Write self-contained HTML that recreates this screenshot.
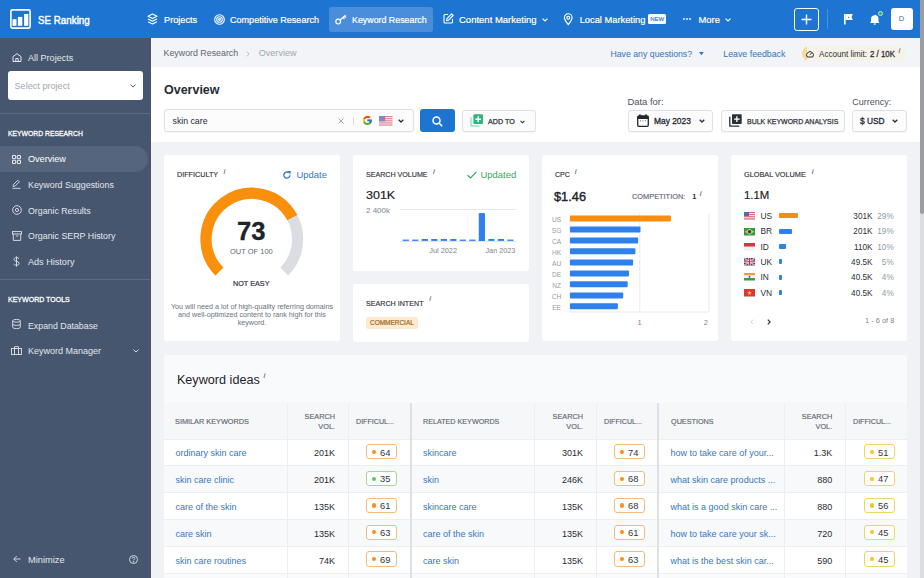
<!DOCTYPE html>
<html><head><meta charset="utf-8">
<style>
*{box-sizing:border-box;margin:0;padding:0}
html,body{width:924px;height:578px;overflow:hidden}
body{position:relative;background:#f1f2f6;font-family:"Liberation Sans",sans-serif;color:#262b33}
.a{position:absolute;white-space:nowrap}
svg{position:absolute;overflow:visible}
#hdr{position:absolute;left:0;top:0;width:920px;height:38px;background:#1d74d1}
#hdr .t{position:absolute;color:#fff;font-size:9.2px;line-height:12px;top:13.5px;white-space:nowrap;-webkit-text-stroke:0.2px #fff}
#sb{position:absolute;left:0;top:38px;width:150.6px;height:540px;background:#45566e}
#sb .t{position:absolute;color:#e3e7ec;font-size:8.9px;line-height:12px;white-space:nowrap;left:28px}
#sb .h{position:absolute;color:#fff;font-size:7.6px;line-height:10px;white-space:nowrap;left:7.7px;-webkit-text-stroke:0.3px #fff}
#scr{position:absolute;left:920px;top:0;width:4px;height:578px;background:#dcdde0}
#thumb{position:absolute;left:920px;top:0;width:4px;height:214px;background:#9b9da1;border-radius:0 0 2px 2px}
.card{position:absolute;background:#fff;border-radius:3px}
.lbl{position:absolute;font-size:7.3px;line-height:10px;color:#30353d;white-space:nowrap;-webkit-text-stroke:0.15px #30353d}
.ii{position:absolute;font-size:8px;font-style:italic;color:#4a5260;line-height:8px}
.btn{position:absolute;background:#fcfcfd;border:1px solid #dde0e5;border-radius:3px;box-shadow:0 1px 1px rgba(0,0,0,0.04)}
</style></head><body>

<!-- HEADER -->
<div id="hdr">
  <!-- logo -->
  <svg style="left:9.8px;top:9px" width="21" height="20" viewBox="0 0 21 20">
    <rect x="0.9" y="0.9" width="19.2" height="18.2" rx="1.5" fill="none" stroke="#fff" stroke-width="1.6"></rect>
    <rect x="2.5" y="10.2" width="4" height="6.6" fill="#fff"></rect>
    <rect x="7.9" y="7.9" width="4.4" height="8.9" fill="#fff"></rect>
    <rect x="14.1" y="5" width="4.2" height="11.8" fill="#fff"></rect>
  </svg>
  <div class="t" style="left: 37.7px; top: 13.2px; font-size: 11px; line-height: 14px; -webkit-text-stroke: 0.45px rgb(255, 255, 255); transform: scaleX(0.8899); transform-origin: 0px 50%;">SE Ranking</div>

  <!-- Projects -->
  <svg style="left:147px;top:13px" width="11" height="12" viewBox="0 0 11 12" fill="none" stroke="#fff" stroke-width="1.1" stroke-linejoin="round">
    <path d="M5.5 1 L10 3.3 L5.5 5.6 L1 3.3 Z"></path><path d="M1 6 L5.5 8.3 L10 6"></path><path d="M1 8.7 L5.5 11 L10 8.7"></path>
  </svg>
  <div class="t" style="left:164px">Projects</div>
  <!-- Competitive -->
  <svg style="left:213.5px;top:13.5px" width="11" height="11" viewBox="0 0 11 11" fill="none" stroke="#fff" stroke-width="1.1">
    <circle cx="5.5" cy="5.5" r="4.8"></circle><circle cx="5.5" cy="5.5" r="2.8"></circle><circle cx="5.5" cy="5.5" r="0.9"></circle>
  </svg>
  <div class="t" style="left:230px;font-size:9.05px">Competitive Research</div>
  <!-- Keyword Research active -->
  <div style="position:absolute;left:328.5px;top:6.5px;width:104.5px;height:25.5px;background:#4a8edb;border-radius:3px"></div>
  <svg style="left:335px;top:14px" width="12" height="11" viewBox="0 0 12 11" fill="none" stroke="#fff" stroke-width="1.2">
    <circle cx="3.2" cy="7.6" r="2.4"></circle><path d="M5 6 L10.5 1.2 M8 3.5 L9.5 5 M9.6 2.2 L11 3.5"></path>
  </svg>
  <div class="t" style="left:352px;font-size:8.85px">Keyword Research</div>
  <!-- Content Marketing -->
  <svg style="left:443px;top:13px" width="11" height="11" viewBox="0 0 11 11" fill="none" stroke="#fff" stroke-width="1.1" stroke-linejoin="round">
    <path d="M5 1.5 H2 A1 1 0 0 0 1 2.5 V9 A1 1 0 0 0 2 10 H8.5 A1 1 0 0 0 9.5 9 V6"></path><path d="M8.5 0.8 L10.2 2.5 L5.5 7.2 L3.6 7.6 L4 5.7 Z"></path>
  </svg>
  <div class="t" style="left:459px;font-size:9.5px">Content Marketing</div>
  <svg style="left:542px;top:18px" width="6" height="4" viewBox="0 0 6 4" fill="none" stroke="#fff" stroke-width="1.1"><path d="M0.5 0.6 L3 3 L5.5 0.6"></path></svg>
  <!-- Local Marketing -->
  <svg style="left:563.3px;top:13.2px" width="10.5" height="12" viewBox="0 0 10 12.5" fill="none" stroke="#fff" stroke-width="1.2">
    <path d="M5 12 C5 12 1 7.5 1 4.8 A4 4 0 0 1 9 4.8 C9 7.5 5 12 5 12 Z"></path><circle cx="5" cy="4.9" r="1.5"></circle>
  </svg>
  <div class="t" style="left:579.7px;font-size:9.3px">Local Marketing</div>
  <div style="position:absolute;left:648.2px;top:14.2px;width:18px;height:10px;background:#fff;border-radius:1.5px;color:#1d74d1;font-size:6px;line-height:10px;text-align:center;-webkit-text-stroke:0.15px #1d74d1">NEW</div>
  <!-- More -->
  <svg style="left:683px;top:18px" width="8" height="2" viewBox="0 0 8 2" fill="#fff"><circle cx="1" cy="1" r="0.9"></circle><circle cx="4" cy="1" r="0.9"></circle><circle cx="7" cy="1" r="0.9"></circle></svg>
  <div class="t" style="left:698.5px;font-size:9.4px">More</div>
  <svg style="left:725px;top:18px" width="6" height="4" viewBox="0 0 6 4" fill="none" stroke="#fff" stroke-width="1.1"><path d="M0.5 0.6 L3 3 L5.5 0.6"></path></svg>
  <!-- plus box -->
  <div style="position:absolute;left:794px;top:8px;width:25px;height:22.5px;border:1.5px solid #fff;border-radius:3px"></div>
  <svg style="left:801px;top:14px" width="11" height="11" viewBox="0 0 11 11" stroke="#fff" stroke-width="1.4"><path d="M5.5 0.5 V10.5 M0.5 5.5 H10.5"></path></svg>
  <div style="position:absolute;left:827px;top:9px;width:1px;height:20px;background:#4f90d8"></div>
  <!-- flag -->
  <svg style="left:844.2px;top:14.2px" width="9" height="10.5" viewBox="0 0 9 10.5" fill="#fff"><rect x="0" y="0" width="1.6" height="10.5"></rect><path d="M1.6 0 H8.8 L7.6 3 L8.8 6 H1.6 Z"></path><circle cx="4.6" cy="3.4" r="0.6" fill="#1d74d1"></circle></svg>
  <!-- bell -->
  <svg style="left:869.5px;top:13.5px" width="12" height="12" viewBox="0 0 12 12" fill="#fff"><path d="M4.5 1.2 A0.8 0.8 0 0 1 6 1.2 C7.8 1.7 8.5 3 8.5 5 V7.5 L9.5 9 H0 L1 7.5 V5 C1 3 1.8 1.7 4.5 1.2 Z"></path><path d="M3.5 9.6 H6 A1.25 1.25 0 0 1 3.5 9.6Z"></path></svg>
  <div style="position:absolute;left:877.8px;top:11px;width:4.8px;height:4.8px;border-radius:50%;background:#2fb36a;border:1px solid #b9e8cc"></div>
  <!-- avatar -->
  <div style="position:absolute;left:890.5px;top:8.2px;width:22px;height:21.6px;background:#fff;border-radius:3px;color:#4d6a98;font-size:7.6px;line-height:21.6px;text-align:center">D</div>
</div>

<div id="scr"></div><div id="thumb"></div>

<!-- SIDEBAR -->
<div id="sb">
  <svg style="left:11.5px;top:15.3px" width="10" height="9" viewBox="0 0 10 9" fill="none" stroke="#e3e7ec" stroke-width="1"><path d="M1 3.6 L5 0.7 L9 3.6 V8.5 H1 Z"></path><path d="M3.8 8.5 V5.6 H6.2 V8.5"></path></svg>
  <div class="t" style="top:13.8px;left:28px;font-size:9.05px">All Projects</div>
  <div style="position:absolute;left:7.5px;top:32.5px;width:135.5px;height:29.5px;background:#fff;border-radius:3px"></div>
  <div class="a" style="left:14.5px;top:41.5px;font-size:9.15px;line-height:12px;color:#a3a9b2">Select project</div>
  <svg style="left:130px;top:46px" width="6" height="4" viewBox="0 0 6 4" fill="none" stroke="#555c66" stroke-width="1"><path d="M0.5 0.6 L3 3 L5.5 0.6"></path></svg>
  <div style="position:absolute;left:0;top:75px;width:150px;height:1px;background:#5b6b82"></div>
  <div class="h" style="top: 90.5px; transform: scaleX(0.8953); transform-origin: 0px 50%;">KEYWORD RESEARCH</div>
  <div style="position:absolute;left:0;top:108px;width:147.5px;height:25.5px;background:#55657c;border-radius:0 13px 13px 0"></div>
  <svg style="left:11.5px;top:116.5px" width="9" height="9" viewBox="0 0 9 9" fill="none" stroke="#fff" stroke-width="0.9"><rect x="0.5" y="0.5" width="3.2" height="3.2" rx="0.4"></rect><rect x="5.3" y="0.5" width="3.2" height="3.2" rx="0.4"></rect><rect x="0.5" y="5.3" width="3.2" height="3.2" rx="0.4"></rect><rect x="5.3" y="5.3" width="3.2" height="3.2" rx="0.4"></rect></svg>
  <div class="t" style="top:115px;color:#fff;font-size:9.1px">Overview</div>
  <svg style="left:12px;top:141px" width="9" height="10" viewBox="0 0 9 10" fill="none" stroke="#dfe3e9" stroke-width="0.9" stroke-linejoin="round"><path d="M1 7.3 L1.4 5.6 L5.8 1.2 L7.4 2.8 L3 7.2 Z"></path><path d="M0.5 9.3 H8.5"></path></svg>
  <div class="t" style="top:141px;font-size:8.9px">Keyword Suggestions</div>
  <svg style="left:11.5px;top:167px" width="10" height="10" viewBox="0 0 10 10" fill="none" stroke="#dfe3e9" stroke-width="0.9"><circle cx="5" cy="5" r="4.3"></circle><circle cx="5" cy="5" r="1.6"></circle></svg>
  <div class="t" style="top:166.5px;font-size:8.8px">Organic Results</div>
  <svg style="left:11.5px;top:192.5px" width="10" height="10" viewBox="0 0 10 10" fill="none" stroke="#dfe3e9" stroke-width="0.9"><rect x="0.5" y="0.6" width="9" height="2.4"></rect><path d="M1.3 3 V9.4 H8.7 V3"></path><path d="M3.8 5 H6.2"></path></svg>
  <div class="t" style="top:192px;font-size:8.85px">Organic SERP History</div>
  <svg style="left:13px;top:218px" width="7" height="11" viewBox="0 0 7 11" fill="none" stroke="#dfe3e9" stroke-width="0.9"><path d="M3.5 0.3 V10.7"></path><path d="M6 2.7 C5.6 1.9 4.7 1.6 3.5 1.6 C2 1.6 1 2.3 1 3.4 C1 5.9 6.1 4.6 6.1 7.3 C6.1 8.6 5 9.3 3.5 9.3 C2.1 9.3 1.2 8.8 0.8 7.9"></path></svg>
  <div class="t" style="top:217.5px;font-size:9.1px">Ads History</div>
  <div style="position:absolute;left:0;top:241px;width:150px;height:1px;background:#5b6b82"></div>
  <div class="h" style="top: 256.5px; transform: scaleX(0.925); transform-origin: 0px 50%;">KEYWORD TOOLS</div>
  <svg style="left:12px;top:281px" width="9" height="10" viewBox="0 0 9 10" fill="none" stroke="#dfe3e9" stroke-width="0.9"><ellipse cx="4.5" cy="1.8" rx="3.8" ry="1.4"></ellipse><path d="M0.7 1.8 V8.2 C0.7 9 2.4 9.6 4.5 9.6 C6.6 9.6 8.3 9 8.3 8.2 V1.8"></path><path d="M0.7 5 C0.7 5.8 2.4 6.4 4.5 6.4 C6.6 6.4 8.3 5.8 8.3 5"></path></svg>
  <div class="t" style="top:281.5px;font-size:8.8px">Expand Database</div>
  <svg style="left:11px;top:307.5px" width="11" height="9" viewBox="0 0 11 9" fill="none" stroke="#dfe3e9" stroke-width="0.9"><rect x="0.5" y="2.5" width="10" height="6"></rect><path d="M3.5 2.5 V0.6 H7.5 V2.5 M3.5 2.5 V8.5 M7.5 2.5 V8.5"></path></svg>
  <div class="t" style="top:307px;font-size:9px">Keyword Manager</div>
  <svg style="left:132.5px;top:311px" width="6" height="4" viewBox="0 0 6 4" fill="none" stroke="#dfe3e9" stroke-width="0.9"><path d="M0.5 0.6 L3 3 L5.5 0.6"></path></svg>
  <svg style="left:12.5px;top:517px" width="8" height="8" viewBox="0 0 8 8" fill="none" stroke="#dfe3e9" stroke-width="0.9"><path d="M7.5 4 H0.8 M3.8 1 L0.8 4 L3.8 7"></path></svg>
  <div class="t" style="top:515.5px;font-size:9.3px">Minimize</div>
  <svg style="left:128.5px;top:517px" width="9" height="9" viewBox="0 0 9 9" fill="none" stroke="#dfe3e9" stroke-width="0.9"><circle cx="4.5" cy="4.5" r="4"></circle><path d="M3.2 3.5 C3.2 2.7 3.8 2.2 4.5 2.2 C5.3 2.2 5.8 2.7 5.8 3.4 C5.8 4.3 4.5 4.4 4.5 5.4"></path><circle cx="4.5" cy="6.8" r="0.35" fill="#dfe3e9"></circle></svg>
</div>

<!-- BREADCRUMB -->
<div style="position:absolute;left:150.6px;top:38px;width:769.4px;height:29.3px;background:#f2f4f7"></div>
<div class="a" style="left:163.5px;top:47px;font-size:8.85px;line-height:12px;color:#5e6670">Keyword Research</div>
<svg style="left:245.5px;top:50.5px" width="4" height="6" viewBox="0 0 4 6" fill="none" stroke="#b5bac1" stroke-width="0.9"><path d="M0.8 0.6 L3 3 L0.8 5.4"></path></svg>
<div class="a" style="left:258.7px;top:47px;font-size:9.1px;line-height:12px;color:#a2a8b0">Overview</div>
<div class="a" style="left:610.4px;top:48px;font-size:8.75px;line-height:12px;color:#3573bb">Have any questions?</div>
<svg style="left:699.3px;top:52.2px" width="4.8" height="3.2" viewBox="0 0 6 4" fill="#3573bb"><path d="M0 0 H6 L3 4 Z"></path></svg>
<div class="a" style="left:723.3px;top:48px;font-size:8.8px;line-height:12px;color:#3573bb">Leave feedback</div>
<div style="position:absolute;left:801.5px;top:45.8px;width:104.5px;height:15px;background:#f7f2e7;border-radius:7.5px;overflow:hidden"><div style="position:absolute;left:0;top:0;width:5px;height:15px;background:#f3dc9a"></div></div>
<svg style="left:806px;top:49.5px" width="8" height="8" viewBox="0 0 8 8" fill="none" stroke="#2b3038" stroke-width="1"><path d="M1.2 7 A3.4 3.4 0 1 1 6.8 7 Z"></path><path d="M4 4.8 L5.6 3"></path></svg>
<div class="a" style="left: 819px; top: 48.5px; font-size: 8.6px; line-height: 11px; color: rgb(43, 48, 56); transform: scaleX(0.9392); transform-origin: 0px 50%;">Account limit:</div>
<div class="a" style="left: 870.3px; top: 48.5px; font-size: 8.6px; line-height: 11px; color: rgb(43, 48, 56); -webkit-text-stroke: 0.3px rgb(43, 48, 56); transform: scaleX(0.918); transform-origin: 0px 50%;">2 / 10K</div>
<div class="ii" style="left:898.5px;top:46.5px">i</div>

<!-- OVERVIEW WHITE -->
<div style="position:absolute;left:150.6px;top:67.3px;width:769.4px;height:74.5px;background:#fff"></div>
<div class="a" style="left:163.7px;top:82.3px;font-size:13px;line-height:15px;font-weight:bold;transform:scaleX(0.96);transform-origin:0 50%;color:#262b33">Overview</div>
<!-- search input -->
<div class="btn" style="left:164px;top:109px;width:249.5px;height:23px"></div>
<div class="a" style="left:172.5px;top:115px;font-size:8.75px;line-height:12px;color:#262b33">skin care</div>
<svg style="left:338px;top:117.5px" width="6" height="6" viewBox="0 0 6 6" stroke="#9aa0a8" stroke-width="0.9"><path d="M0.5 0.5 L5.5 5.5 M5.5 0.5 L0.5 5.5"></path></svg>
<div style="position:absolute;left:353px;top:116.5px;width:1px;height:8px;background:#d9dce1"></div>
<svg style="left:361.7px;top:115.2px" width="10.8" height="10.8" viewBox="0 0 48 48">
<path fill="#FFC107" d="M43.6 20H42V20H24v8h11.3C33.6 32.7 29.2 36 24 36c-6.6 0-12-5.4-12-12s5.4-12 12-12c3.1 0 5.8 1.2 7.9 3l5.7-5.7C34 6.1 29.3 4 24 4 13 4 4 13 4 24s9 20 20 20 20-9 20-20c0-1.3-.1-2.7-.4-4z"></path>
<path fill="#FF3D00" d="M6.3 14.7l6.6 4.8C14.7 15.1 19 12 24 12c3.1 0 5.8 1.2 7.9 3l5.7-5.7C34 6.1 29.3 4 24 4 16.3 4 9.7 8.3 6.3 14.7z"></path>
<path fill="#4CAF50" d="M24 44c5.2 0 9.9-2 13.4-5.2l-6.2-5.2C29.2 35.1 26.7 36 24 36c-5.2 0-9.6-3.3-11.3-8l-6.5 5C9.5 39.6 16.2 44 24 44z"></path>
<path fill="#1976D2" d="M43.6 20H42V20H24v8h11.3c-.8 2.2-2.2 4.2-4.1 5.6l6.2 5.2C37 39.2 44 34 44 24c0-1.3-.1-2.7-.4-4z"></path>
</svg>
<svg style="left:379px;top:116px" width="13.5" height="9.6" viewBox="0 0 13 9" preserveAspectRatio="none" opacity="0.8"><rect width="13" height="9" fill="#eceef2"></rect><g fill="#e0606f"><rect y="0" width="13" height="1"></rect><rect y="2" width="13" height="1"></rect><rect y="4" width="13" height="1"></rect><rect y="6" width="13" height="1"></rect><rect y="8" width="13" height="1"></rect></g><rect width="6" height="5" fill="#6070a8"></rect></svg>
<svg style="left:397.5px;top:119px" width="6" height="4" viewBox="0 0 6 4" fill="none" stroke="#2b3038" stroke-width="1.3"><path d="M0.7 0.7 L3 3 L5.3 0.7"></path></svg>
<!-- search btn -->
<div style="position:absolute;left:420px;top:109px;width:35px;height:23px;background:#1d74d1;border-radius:3px"></div>
<svg style="left:432px;top:115.5px" width="11" height="11" viewBox="0 0 11 11" fill="none" stroke="#fff" stroke-width="1.5"><circle cx="4.5" cy="4.5" r="3.5"></circle><path d="M7 7 L10.2 10.2"></path></svg>
<!-- add to -->
<div class="btn" style="left:462px;top:109.5px;width:73.5px;height:22.5px"></div>
<svg style="left:470px;top:114px" width="14" height="13" viewBox="0 0 14 13"><path d="M1 3.5 V12 H9.5" fill="none" stroke="#6fd3a6" stroke-width="1"></path><rect x="3.4" y="0.3" width="9.6" height="9.7" rx="1.2" fill="#30b57a"></rect><path d="M8.2 2.3 V8 M5.35 5.15 H11.05" stroke="#fff" stroke-width="1.5"></path></svg>
<div class="a" style="left:488px;top:116.5px;font-size:7.6px;line-height:9px;color:#2b3038;-webkit-text-stroke:0.25px #2b3038;transform:scaleX(0.943);transform-origin:0 50%">ADD TO</div>
<svg style="left:520px;top:119.5px" width="5" height="4" viewBox="0 0 6 4" fill="none" stroke="#2b3038" stroke-width="1.3"><path d="M0.7 0.7 L3 3 L5.3 0.7"></path></svg>

<div class="a" style="left:627.4px;top:95.5px;font-size:9.45px;line-height:12px;color:#4a5260">Data for:</div>
<div class="btn" style="left:628px;top:109.5px;width:85px;height:22px"></div>
<svg style="left:637px;top:114px" width="12" height="13" viewBox="0 0 12 13"><rect x="0.7" y="2" width="10.6" height="10.3" rx="1.2" fill="none" stroke="#23272e" stroke-width="1.3"></rect><rect x="0.7" y="2" width="10.6" height="3" fill="#23272e"></rect><path d="M3 0.3 V3 M9 0.3 V3" stroke="#23272e" stroke-width="1.3"></path><path d="M3.2 6.8 H4 M5.6 6.8 H6.4 M8 6.8 H8.8" stroke="#23272e" stroke-width="0.8"></path></svg>
<div class="a" style="left:654.2px;top:115px;font-size:9.2px;line-height:12px;color:#23272e;-webkit-text-stroke:0.3px #23272e;transform:scaleX(0.914);transform-origin:0 50%">May 2023</div>
<svg style="left:698.5px;top:119px" width="6" height="4" viewBox="0 0 6 4" fill="none" stroke="#2b3038" stroke-width="1.3"><path d="M0.7 0.7 L3 3 L5.3 0.7"></path></svg>
<div class="btn" style="left:720.7px;top:109.5px;width:124px;height:22px"></div>
<svg style="left:729px;top:114px" width="13" height="13" viewBox="0 0 13 13"><path d="M0.8 2.8 V12.2 H10.2" fill="none" stroke="#2b3038" stroke-width="1.3"></path><rect x="3" y="0.3" width="9.7" height="9.7" rx="0.8" fill="#2b3038"></rect><path d="M7.85 2.3 V8 M5 5.15 H10.7" stroke="#fff" stroke-width="1.3"></path></svg>
<div class="a" style="left:746.6px;top:116.5px;font-size:7.6px;line-height:9px;color:#2b3038;-webkit-text-stroke:0.25px #2b3038;transform:scaleX(0.918);transform-origin:0 50%">BULK KEYWORD ANALYSIS</div>
<div class="a" style="left:852.3px;top:95.5px;font-size:8.97px;line-height:12px;color:#4a5260">Currency:</div>
<div class="btn" style="left:852.3px;top:109.5px;width:54.7px;height:22px"></div>
<div class="a" style="left:860px;top:115px;font-size:9.2px;line-height:12px;color:#23272e;-webkit-text-stroke:0.3px #23272e;transform:scaleX(0.905);transform-origin:0 50%">$ USD</div>
<svg style="left:892px;top:119px" width="6" height="4" viewBox="0 0 6 4" fill="none" stroke="#2b3038" stroke-width="1.3"><path d="M0.7 0.7 L3 3 L5.3 0.7"></path></svg>

<!-- DIFFICULTY -->
<div class="card" style="left:164px;top:155px;width:176px;height:185.5px">
  <div class="lbl" style="left: 12.6px; top: 14.6px; transform: scaleX(0.9874); transform-origin: 0px 50%;">DIFFICULTY</div>
  <div class="ii" style="left:59.5px;top:12.5px">i</div>
  <svg style="left:119.3px;top:16px" width="8" height="8" viewBox="0 0 8 8"><path d="M7 4.3 A3.1 3.1 0 1 1 5.6 1.5" fill="none" stroke="#2f74c0" stroke-width="1.3"></path><path d="M4.3 0.2 L7.7 0.1 L7.4 3.4 Z" fill="#2f74c0"></path></svg>
  <div class="a" style="left:132.5px;top:14.4px;font-size:9.45px;line-height:12px;color:#3478c3">Update</div>
  <svg style="left:0;top:0" width="176" height="185" viewBox="0 0 176 185">
    <path d="M55.41 116.49 A45.8 45.8 0 1 1 120.19 116.49" fill="none" stroke="#dcdde3" stroke-width="11.2"></path>
    <path d="M55.41 116.49 A45.8 45.8 0 1 1 128.28 62.67" fill="none" stroke="#f98f0a" stroke-width="11.2"></path>
  </svg>
  <div class="a" style="left: 72.7px; top: 60.5px; font-size: 25px; line-height: 30px; font-weight: bold; color: rgb(31, 35, 43); -webkit-text-stroke: 0.3px rgb(31, 35, 43); transform: scaleX(1.0247); transform-origin: 0px 50%;">73</div>
  <div class="a" style="left: 65.9px; top: 92px; font-size: 7.55px; line-height: 9px; color: rgb(95, 102, 112); transform: scaleX(0.9939); transform-origin: 0px 50%;">OUT OF 100</div>
  <div class="a" style="left: 69px; top: 123.5px; font-size: 7.6px; line-height: 10px; color: rgb(48, 53, 61); -webkit-text-stroke: 0.2px rgb(48, 53, 61); transform: scaleX(0.9539); transform-origin: 0px 50%;">NOT EASY</div>
  <div style="position:absolute;left:0;top:148px;width:176px;text-align:center;font-size:7.18px;line-height:8.2px;color:#6b727c">You will need a lot of high-quality referring domains<br>and well-optimized content to rank high for this<br>keyword.</div>
</div>

<!-- SEARCH VOLUME -->
<div class="card" style="left:353px;top:155.3px;width:175.7px;height:115.5px">
  <div class="lbl" style="left: 13px; top: 14.6px; transform: scaleX(0.9737); transform-origin: 0px 50%;">SEARCH VOLUME</div>
  <div class="ii" style="left:80px;top:12.5px">i</div>
  <svg style="left:113.5px;top:15.5px" width="10" height="8" viewBox="0 0 10 8" fill="none" stroke="#3aa757" stroke-width="1.2"><path d="M0.6 4.2 L3.6 7 L9.4 0.8"></path></svg>
  <div class="a" style="left:127.5px;top:14px;font-size:9.44px;line-height:12px;color:#3aa757">Updated</div>
  <div class="a" style="left: 13px; top: 32.5px; font-size: 11.4px; line-height: 15px; color: rgb(31, 35, 43); -webkit-text-stroke: 0.2px rgb(31, 35, 43); transform: scaleX(1.0974); transform-origin: 0px 50%;">301K</div>
  <div class="a" style="left:13px;top:51px;font-size:8px;line-height:10px;color:#7d848d">2 400k</div>
  <div style="position:absolute;left:47px;top:54.2px;width:116px;height:0.8px;background:#e6e8ec"></div>
  <div style="position:absolute;left:47px;top:85.6px;width:116px;height:0.8px;background:#dfe6f2"></div>
  <svg style="left:0;top:0" width="176" height="115" viewBox="0 0 176 115"><rect x="49.70" y="84.60" width="6.2" height="1.3" fill="#2f80ed"></rect><rect x="59.21" y="84.60" width="6.2" height="1.3" fill="#2f80ed"></rect><rect x="68.72" y="84.00" width="6.2" height="1.9" fill="#2f80ed"></rect><rect x="78.23" y="84.00" width="6.2" height="1.9" fill="#2f80ed"></rect><rect x="87.74" y="84.00" width="6.2" height="1.9" fill="#2f80ed"></rect><rect x="97.25" y="84.00" width="6.2" height="1.9" fill="#2f80ed"></rect><rect x="106.76" y="84.60" width="6.2" height="1.3" fill="#2f80ed"></rect><rect x="116.27" y="84.60" width="6.2" height="1.3" fill="#2f80ed"></rect><path d="M125.78 85.90 V59.20 Q125.78 58.00 126.98 58.00 H130.78 Q131.98 58.00 131.98 59.20 V85.90 Z" fill="#2f80ed"></path><rect x="135.29" y="84.00" width="6.2" height="1.9" fill="#2f80ed"></rect><rect x="144.80" y="84.00" width="6.2" height="1.9" fill="#2f80ed"></rect><rect x="154.31" y="84.60" width="6.2" height="1.3" fill="#2f80ed"></rect></svg>
  <div class="a" style="left:76.3px;top:91px;font-size:7.33px;line-height:10px;color:#7d848d">Jul 2022</div>
  <div class="a" style="left:132.5px;top:91px;font-size:7.24px;line-height:10px;color:#7d848d">Jan 2023</div>
</div>

<!-- SEARCH INTENT -->
<div class="card" style="left:353.2px;top:284px;width:175.4px;height:57.6px">
  <div class="lbl" style="left: 12.4px; top: 14.6px; transform: scaleX(0.9779); transform-origin: 0px 50%;">SEARCH INTENT</div>
  <div class="ii" style="left:76px;top:11px">i</div>
  <div style="position:absolute;left:12.8px;top:32.8px;width:51.6px;height:12.3px;background:#fcebd0;border-radius:2px"></div><div class="a" style="left: 16.6px; top: 34px; font-size: 6.9px; line-height: 10px; color: rgb(156, 102, 32); -webkit-text-stroke: 0.2px rgb(156, 102, 32); transform: scaleX(0.9375); transform-origin: 0px 50%;">COMMERCIAL</div>
</div>


<!-- CPC -->
<div class="card" style="left:541.8px;top:155px;width:176.2px;height:185.7px">
  <div class="lbl" style="left: 12.8px; top: 14.6px; transform: scaleX(0.9606); transform-origin: 0px 50%;">CPC</div>
  <div class="ii" style="left:33px;top:12.5px">i</div>
  <div class="a" style="left: 12.5px; top: 34px; font-size: 13px; line-height: 16px; color: rgb(31, 35, 43); -webkit-text-stroke: 0.4px rgb(31, 35, 43); transform: scaleX(0.9832); transform-origin: 0px 50%;">$1.46</div>
  <div class="a" style="left: 90.1px; top: 36.6px; font-size: 7.3px; line-height: 10px; color: rgb(95, 107, 122); -webkit-text-stroke: 0.15px rgb(95, 107, 122); transform: scaleX(1.0113); transform-origin: 0px 50%;">COMPETITION:</div>
  <div class="a" style="left:150.5px;top:36.6px;font-size:7.3px;line-height:10px;font-weight:bold;color:#2b3038">1</div>
  <div class="ii" style="left:158px;top:34.5px">i</div>
  <svg style="left:0;top:0" width="176" height="186" viewBox="0 0 176 186">
    <path d="M28.0 58.4 V157 H166.9 V58.4" fill="none" stroke="#e8eaee" stroke-width="1"></path>
    <path d="M97.8 58.4 V157" stroke="#e8eaee" stroke-width="1"></path>
    <rect x="28.00" y="60.50" width="100.90" height="6" rx="1" fill="#fa8c0f"></rect><rect x="28.00" y="71.60" width="70.50" height="6" rx="1" fill="#2f80ed"></rect><rect x="28.00" y="82.40" width="68.20" height="6" rx="1" fill="#2f80ed"></rect><rect x="28.00" y="93.20" width="65.40" height="6" rx="1" fill="#2f80ed"></rect><rect x="28.00" y="104.40" width="63.10" height="6" rx="1" fill="#2f80ed"></rect><rect x="28.00" y="115.50" width="59.00" height="6" rx="1" fill="#2f80ed"></rect><rect x="28.00" y="126.30" width="57.70" height="6" rx="1" fill="#2f80ed"></rect><rect x="28.00" y="137.50" width="53.20" height="6" rx="1" fill="#2f80ed"></rect><rect x="28.00" y="148.30" width="47.90" height="6" rx="1" fill="#2f80ed"></rect>
  </svg>
  <div class="a" style="left:9.8px;top:60.00px;width:10px;text-align:center;font-size:6.6px;line-height:9px;color:#959ba4">US</div><div class="a" style="left:9.8px;top:71.10px;width:10px;text-align:center;font-size:6.6px;line-height:9px;color:#959ba4">SG</div><div class="a" style="left:9.8px;top:81.90px;width:10px;text-align:center;font-size:6.6px;line-height:9px;color:#959ba4">CA</div><div class="a" style="left:9.8px;top:92.70px;width:10px;text-align:center;font-size:6.6px;line-height:9px;color:#959ba4">HK</div><div class="a" style="left:9.8px;top:103.90px;width:10px;text-align:center;font-size:6.6px;line-height:9px;color:#959ba4">AU</div><div class="a" style="left:9.8px;top:115.00px;width:10px;text-align:center;font-size:6.6px;line-height:9px;color:#959ba4">DE</div><div class="a" style="left:9.8px;top:125.80px;width:10px;text-align:center;font-size:6.6px;line-height:9px;color:#959ba4">NZ</div><div class="a" style="left:9.8px;top:137.00px;width:10px;text-align:center;font-size:6.6px;line-height:9px;color:#959ba4">CH</div><div class="a" style="left:9.8px;top:147.80px;width:10px;text-align:center;font-size:6.6px;line-height:9px;color:#959ba4">EE</div>
  <div class="a" style="left:95.6px;top:163px;font-size:7.5px;line-height:10px;color:#7d848d">1</div>
  <div class="a" style="left:162px;top:163px;font-size:7.5px;line-height:10px;color:#7d848d">2</div>
</div>

<!-- GLOBAL VOLUME -->
<div class="card" style="left:730.7px;top:155px;width:176.5px;height:185.7px">
  <div class="lbl" style="left: 13.5px; top: 14.6px; transform: scaleX(1.0003); transform-origin: 0px 50%;">GLOBAL VOLUME</div>
  <div class="ii" style="left:81px;top:12.5px">i</div>
  <div class="a" style="left: 13.5px; top: 31.7px; font-size: 11.6px; line-height: 15px; color: rgb(31, 35, 43); -webkit-text-stroke: 0.2px rgb(31, 35, 43); transform: scaleX(0.9813); transform-origin: 0px 50%;">1.1M</div>
  <svg style="left:13px;top:57.05px" width="11" height="7.5" viewBox="0 0 11 7.5"><rect width="11" height="7.5" fill="#eceef2"></rect><g fill="#e05563"><rect y="0" width="11" height="1"></rect><rect y="2.1" width="11" height="1"></rect><rect y="4.2" width="11" height="1"></rect><rect y="6.4" width="11" height="1.1"></rect></g><rect width="5" height="4" fill="#5468b0"></rect></svg><div class="a" style="left:29.7px;top:55.90px;font-size:8.4px;line-height:11px;color:#2b3038">US</div><div style="position:absolute;left:48.3px;top:58.30px;width:19.2px;height:5px;border-radius:1px;background:#fa8c0f"></div><div class="a" style="left:100px;width:41.8px;text-align:right;top:55.90px;font-size:8.2px;line-height:11px;color:#2b3038">301K</div><div class="a" style="left:141px;width:22px;text-align:right;top:55.90px;font-size:8.2px;line-height:11px;color:#9399a2">29%</div><svg style="left:13px;top:72.55px" width="11" height="7.5" viewBox="0 0 11 7.5"><rect width="11" height="7.5" fill="#2c9a4a"></rect><path d="M5.5 0.8 L10 3.75 L5.5 6.7 L1 3.75Z" fill="#f6d23a"></path><circle cx="5.5" cy="3.75" r="1.8" fill="#24428c"></circle></svg><div class="a" style="left:29.7px;top:71.40px;font-size:8.4px;line-height:11px;color:#2b3038">BR</div><div style="position:absolute;left:48.3px;top:73.80px;width:12.8px;height:5px;border-radius:1px;background:#2f80ed"></div><div class="a" style="left:100px;width:41.8px;text-align:right;top:71.40px;font-size:8.2px;line-height:11px;color:#2b3038">201K</div><div class="a" style="left:141px;width:22px;text-align:right;top:71.40px;font-size:8.2px;line-height:11px;color:#9399a2">19%</div><svg style="left:13px;top:87.75px" width="11" height="7.5" viewBox="0 0 11 7.5"><rect width="11" height="3.75" fill="#d8353f"></rect><rect y="3.75" width="11" height="3.75" fill="#f0f1f4"></rect></svg><div class="a" style="left:29.7px;top:86.60px;font-size:8.4px;line-height:11px;color:#2b3038">ID</div><div style="position:absolute;left:48.3px;top:89.00px;width:6.7px;height:5px;border-radius:1px;background:#2f80ed"></div><div class="a" style="left:100px;width:41.8px;text-align:right;top:86.60px;font-size:8.2px;line-height:11px;color:#2b3038">110K</div><div class="a" style="left:141px;width:22px;text-align:right;top:86.60px;font-size:8.2px;line-height:11px;color:#9399a2">10%</div><svg style="left:13px;top:102.95px" width="11" height="7.5" viewBox="0 0 11 7.5"><rect width="11" height="7.5" fill="#28408a"></rect><path d="M0 0 L11 7.5 M11 0 L0 7.5" stroke="#fff" stroke-width="1.5"></path><path d="M0 0 L11 7.5 M11 0 L0 7.5" stroke="#d8353f" stroke-width="0.6"></path><path d="M5.5 0 V7.5 M0 3.75 H11" stroke="#fff" stroke-width="2.2"></path><path d="M5.5 0 V7.5 M0 3.75 H11" stroke="#d8353f" stroke-width="1.2"></path></svg><div class="a" style="left:29.7px;top:101.80px;font-size:8.4px;line-height:11px;color:#2b3038">UK</div><div style="position:absolute;left:48.3px;top:104.20px;width:2.7px;height:5px;border-radius:1px;background:#2f80ed"></div><div class="a" style="left:100px;width:41.8px;text-align:right;top:101.80px;font-size:8.2px;line-height:11px;color:#2b3038">49.5K</div><div class="a" style="left:141px;width:22px;text-align:right;top:101.80px;font-size:8.2px;line-height:11px;color:#9399a2">5%</div><svg style="left:13px;top:118.45px" width="11" height="7.5" viewBox="0 0 11 7.5"><rect width="11" height="2.5" fill="#f39a3a"></rect><rect y="2.5" width="11" height="2.5" fill="#f4f4f6"></rect><rect y="5" width="11" height="2.5" fill="#3b9a4e"></rect><circle cx="5.5" cy="3.75" r="0.9" fill="#3a4d9a"></circle></svg><div class="a" style="left:29.7px;top:117.30px;font-size:8.4px;line-height:11px;color:#2b3038">IN</div><div style="position:absolute;left:48.3px;top:119.70px;width:2.7px;height:5px;border-radius:1px;background:#2f80ed"></div><div class="a" style="left:100px;width:41.8px;text-align:right;top:117.30px;font-size:8.2px;line-height:11px;color:#2b3038">40.5K</div><div class="a" style="left:141px;width:22px;text-align:right;top:117.30px;font-size:8.2px;line-height:11px;color:#9399a2">4%</div><svg style="left:13px;top:134.05px" width="11" height="7.5" viewBox="0 0 11 7.5"><rect width="11" height="7.5" fill="#e0343b"></rect><path d="M5.5 1.6 L6.1 3.3 L7.8 3.3 L6.4 4.3 L7 6 L5.5 5 L4 6 L4.6 4.3 L3.2 3.3 L4.9 3.3Z" fill="#f6d23a"></path></svg><div class="a" style="left:29.7px;top:132.90px;font-size:8.4px;line-height:11px;color:#2b3038">VN</div><div style="position:absolute;left:48.3px;top:135.30px;width:2.7px;height:5px;border-radius:1px;background:#2f80ed"></div><div class="a" style="left:100px;width:41.8px;text-align:right;top:132.90px;font-size:8.2px;line-height:11px;color:#2b3038">40.5K</div><div class="a" style="left:141px;width:22px;text-align:right;top:132.90px;font-size:8.2px;line-height:11px;color:#9399a2">4%</div>
  <svg style="left:19px;top:163.5px" width="4" height="6" viewBox="0 0 4 6" fill="none" stroke="#c9cdd3" stroke-width="0.9"><path d="M3.2 0.6 L0.9 3 L3.2 5.4"></path></svg>
  <svg style="left:36px;top:163.5px" width="4" height="6" viewBox="0 0 4 6" fill="none" stroke="#2b3038" stroke-width="1.2"><path d="M0.8 0.6 L3.1 3 L0.8 5.4"></path></svg>
  <div class="a" style="left: 134.3px; top: 161.3px; font-size: 8px; line-height: 10px; color: rgb(127, 134, 143); transform: scaleX(0.931); transform-origin: 0px 50%;">1 - 6 of 8</div>
</div>

<!-- KEYWORD IDEAS -->
<div style="position:absolute;left:163.7px;top:354.6px;width:743.5px;height:230px;background:#f9fafb;border-radius:3px 3px 0 0"></div>
<div class="a" style="left:176.9px;top:371.6px;font-size:12.65px;line-height:16px;color:#1f232b">Keyword ideas</div>
<div class="ii" style="left:263.5px;top:372px">i</div>
<div style="position:absolute;left:163.7px;top:403.2px;width:743.5px;height:35.8px;background:#f6f7f9"></div>
<div style="position:absolute;left:163.7px;top:439px;width:743.5px;height:26.8px;background:#ffffff"></div>
<div style="position:absolute;left:163.7px;top:465.8px;width:743.5px;height:26.8px;background:#f8f9fb"></div>
<div style="position:absolute;left:163.7px;top:492.6px;width:743.5px;height:26.8px;background:#ffffff"></div>
<div style="position:absolute;left:163.7px;top:519.4px;width:743.5px;height:26.8px;background:#f8f9fb"></div>
<div style="position:absolute;left:163.7px;top:546.2px;width:743.5px;height:26.8px;background:#ffffff"></div>
<div style="position:absolute;left:163.7px;top:438.5px;width:743.5px;height:1px;background:#eceef1"></div>
<div style="position:absolute;left:163.7px;top:465.3px;width:743.5px;height:1px;background:#eceef1"></div>
<div style="position:absolute;left:163.7px;top:492.1px;width:743.5px;height:1px;background:#eceef1"></div>
<div style="position:absolute;left:163.7px;top:518.9px;width:743.5px;height:1px;background:#eceef1"></div>
<div style="position:absolute;left:163.7px;top:545.7px;width:743.5px;height:1px;background:#eceef1"></div>
<div style="position:absolute;left:163.7px;top:572.5px;width:743.5px;height:1px;background:#eceef1"></div>
<div class="a" style="left: 175.4px; top: 417px; font-size: 7.3px; line-height: 10px; color: rgb(95, 104, 115); -webkit-text-stroke: 0.15px rgb(95, 104, 115); transform: scaleX(1.0028); transform-origin: 0px 50%;">SIMILAR KEYWORDS</div>
<div class="a" style="left:295.0px;width:40px;text-align:right;top:411.5px;font-size:7.3px;line-height:10.5px;color:#5f6873;-webkit-text-stroke:0.15px #5f6873">SEARCH<br>VOL.</div>
<div class="a" style="left: 356px; top: 417px; font-size: 7.3px; line-height: 10px; color: rgb(95, 104, 115); -webkit-text-stroke: 0.15px rgb(95, 104, 115); transform: scaleX(0.9763); transform-origin: 0px 50%;">DIFFICUL...</div>
<div style="position:absolute;left:286.8px;top:403.2px;width:1px;height:175px;background:#eceef1"></div>
<div style="position:absolute;left:348.2px;top:403.2px;width:1px;height:175px;background:#eceef1"></div>
<div class="a" style="left:175.4px;top:447.4px;font-size:9px;line-height:12px;color:#3777c0">ordinary skin care</div>
<div class="a" style="left:285.0px;width:50px;text-align:right;top:447.4px;font-size:9px;line-height:12px;color:#262b33">201K</div>
<div style="position:absolute;left:366.3px;top:444.2px;width:30.5px;height:15.3px;border:1px solid #f2bd78;border-radius:3px;background:#fff"></div>
<div style="position:absolute;left:371.9px;top:449.8px;width:4.3px;height:4.3px;border-radius:50%;background:#f5901e"></div>
<div class="a" style="left: 380px; top: 446.5px; font-size: 8.6px; line-height: 12px; color: rgb(48, 53, 61); transform: scaleX(1.0876); transform-origin: 0px 50%;">64</div>
<div class="a" style="left:175.4px;top:474.2px;font-size:9px;line-height:12px;color:#3777c0">skin care clinic</div>
<div class="a" style="left:285.0px;width:50px;text-align:right;top:474.2px;font-size:9px;line-height:12px;color:#262b33">201K</div>
<div style="position:absolute;left:366.3px;top:471.0px;width:30.5px;height:15.3px;border:1px solid #a3d994;border-radius:3px;background:#fff"></div>
<div style="position:absolute;left:371.9px;top:476.6px;width:4.3px;height:4.3px;border-radius:50%;background:#6cc655"></div>
<div class="a" style="left: 380px; top: 473.3px; font-size: 8.6px; line-height: 12px; color: rgb(48, 53, 61); transform: scaleX(1.0876); transform-origin: 0px 50%;">35</div>
<div class="a" style="left:175.4px;top:501.0px;font-size:9px;line-height:12px;color:#3777c0">care of the skin</div>
<div class="a" style="left:285.0px;width:50px;text-align:right;top:501.0px;font-size:9px;line-height:12px;color:#262b33">135K</div>
<div style="position:absolute;left:366.3px;top:497.8px;width:30.5px;height:15.3px;border:1px solid #f2bd78;border-radius:3px;background:#fff"></div>
<div style="position:absolute;left:371.9px;top:503.4px;width:4.3px;height:4.3px;border-radius:50%;background:#f5901e"></div>
<div class="a" style="left: 380px; top: 500.1px; font-size: 8.6px; line-height: 12px; color: rgb(48, 53, 61); transform: scaleX(1.0876); transform-origin: 0px 50%;">61</div>
<div class="a" style="left:175.4px;top:527.8px;font-size:9px;line-height:12px;color:#3777c0">care skin</div>
<div class="a" style="left:285.0px;width:50px;text-align:right;top:527.8px;font-size:9px;line-height:12px;color:#262b33">135K</div>
<div style="position:absolute;left:366.3px;top:524.6px;width:30.5px;height:15.3px;border:1px solid #f2bd78;border-radius:3px;background:#fff"></div>
<div style="position:absolute;left:371.9px;top:530.2px;width:4.3px;height:4.3px;border-radius:50%;background:#f5901e"></div>
<div class="a" style="left: 380px; top: 526.9px; font-size: 8.6px; line-height: 12px; color: rgb(48, 53, 61); transform: scaleX(1.0876); transform-origin: 0px 50%;">63</div>
<div class="a" style="left:175.4px;top:554.6px;font-size:9px;line-height:12px;color:#3777c0">skin care routines</div>
<div class="a" style="left:285.0px;width:50px;text-align:right;top:554.6px;font-size:9px;line-height:12px;color:#262b33">74K</div>
<div style="position:absolute;left:366.3px;top:551.4px;width:30.5px;height:15.3px;border:1px solid #f2bd78;border-radius:3px;background:#fff"></div>
<div style="position:absolute;left:371.9px;top:557.0px;width:4.3px;height:4.3px;border-radius:50%;background:#f5901e"></div>
<div class="a" style="left: 380px; top: 553.7px; font-size: 8.6px; line-height: 12px; color: rgb(48, 53, 61); transform: scaleX(1.0876); transform-origin: 0px 50%;">69</div>
<div class="a" style="left: 423px; top: 417px; font-size: 7.3px; line-height: 10px; color: rgb(95, 104, 115); -webkit-text-stroke: 0.15px rgb(95, 104, 115); transform: scaleX(0.983); transform-origin: 0px 50%;">RELATED KEYWORDS</div>
<div class="a" style="left:543.0px;width:40px;text-align:right;top:411.5px;font-size:7.3px;line-height:10.5px;color:#5f6873;-webkit-text-stroke:0.15px #5f6873">SEARCH<br>VOL.</div>
<div class="a" style="left: 603.9px; top: 417px; font-size: 7.3px; line-height: 10px; color: rgb(95, 104, 115); -webkit-text-stroke: 0.15px rgb(95, 104, 115); transform: scaleX(0.9763); transform-origin: 0px 50%;">DIFFICUL...</div>
<div style="position:absolute;left:534.3px;top:403.2px;width:1px;height:175px;background:#eceef1"></div>
<div style="position:absolute;left:596.1px;top:403.2px;width:1px;height:175px;background:#eceef1"></div>
<div class="a" style="left:423.0px;top:447.4px;font-size:9px;line-height:12px;color:#3777c0">skincare</div>
<div class="a" style="left:533.0px;width:50px;text-align:right;top:447.4px;font-size:9px;line-height:12px;color:#262b33">301K</div>
<div style="position:absolute;left:614.0px;top:444.2px;width:30.7px;height:15.3px;border:1px solid #f2bd78;border-radius:3px;background:#fff"></div>
<div style="position:absolute;left:619.6px;top:449.8px;width:4.3px;height:4.3px;border-radius:50%;background:#f5901e"></div>
<div class="a" style="left: 627.7px; top: 446.5px; font-size: 8.6px; line-height: 12px; color: rgb(48, 53, 61); transform: scaleX(1.0876); transform-origin: 0px 50%;">74</div>
<div class="a" style="left:423.0px;top:474.2px;font-size:9px;line-height:12px;color:#3777c0">skin</div>
<div class="a" style="left:533.0px;width:50px;text-align:right;top:474.2px;font-size:9px;line-height:12px;color:#262b33">246K</div>
<div style="position:absolute;left:614.0px;top:471.0px;width:30.7px;height:15.3px;border:1px solid #f2bd78;border-radius:3px;background:#fff"></div>
<div style="position:absolute;left:619.6px;top:476.6px;width:4.3px;height:4.3px;border-radius:50%;background:#f5901e"></div>
<div class="a" style="left: 627.7px; top: 473.3px; font-size: 8.6px; line-height: 12px; color: rgb(48, 53, 61); transform: scaleX(1.0876); transform-origin: 0px 50%;">68</div>
<div class="a" style="left:423.0px;top:501.0px;font-size:9px;line-height:12px;color:#3777c0">skincare care</div>
<div class="a" style="left:533.0px;width:50px;text-align:right;top:501.0px;font-size:9px;line-height:12px;color:#262b33">135K</div>
<div style="position:absolute;left:614.0px;top:497.8px;width:30.7px;height:15.3px;border:1px solid #f2bd78;border-radius:3px;background:#fff"></div>
<div style="position:absolute;left:619.6px;top:503.4px;width:4.3px;height:4.3px;border-radius:50%;background:#f5901e"></div>
<div class="a" style="left: 627.7px; top: 500.1px; font-size: 8.6px; line-height: 12px; color: rgb(48, 53, 61); transform: scaleX(1.0876); transform-origin: 0px 50%;">68</div>
<div class="a" style="left:423.0px;top:527.8px;font-size:9px;line-height:12px;color:#3777c0">care of the skin</div>
<div class="a" style="left:533.0px;width:50px;text-align:right;top:527.8px;font-size:9px;line-height:12px;color:#262b33">135K</div>
<div style="position:absolute;left:614.0px;top:524.6px;width:30.7px;height:15.3px;border:1px solid #f2bd78;border-radius:3px;background:#fff"></div>
<div style="position:absolute;left:619.6px;top:530.2px;width:4.3px;height:4.3px;border-radius:50%;background:#f5901e"></div>
<div class="a" style="left: 627.7px; top: 526.9px; font-size: 8.6px; line-height: 12px; color: rgb(48, 53, 61); transform: scaleX(1.0876); transform-origin: 0px 50%;">61</div>
<div class="a" style="left:423.0px;top:554.6px;font-size:9px;line-height:12px;color:#3777c0">care skin</div>
<div class="a" style="left:533.0px;width:50px;text-align:right;top:554.6px;font-size:9px;line-height:12px;color:#262b33">135K</div>
<div style="position:absolute;left:614.0px;top:551.4px;width:30.7px;height:15.3px;border:1px solid #f2bd78;border-radius:3px;background:#fff"></div>
<div style="position:absolute;left:619.6px;top:557.0px;width:4.3px;height:4.3px;border-radius:50%;background:#f5901e"></div>
<div class="a" style="left: 627.7px; top: 553.7px; font-size: 8.6px; line-height: 12px; color: rgb(48, 53, 61); transform: scaleX(1.0876); transform-origin: 0px 50%;">63</div>
<div class="a" style="left: 670.6px; top: 417px; font-size: 7.3px; line-height: 10px; color: rgb(95, 104, 115); -webkit-text-stroke: 0.15px rgb(95, 104, 115); transform: scaleX(0.9934); transform-origin: 0px 50%;">QUESTIONS</div>
<div class="a" style="left:792.2px;width:40px;text-align:right;top:411.5px;font-size:7.3px;line-height:10.5px;color:#5f6873;-webkit-text-stroke:0.15px #5f6873">SEARCH<br>VOL.</div>
<div class="a" style="left: 853.1px; top: 417px; font-size: 7.3px; line-height: 10px; color: rgb(95, 104, 115); -webkit-text-stroke: 0.15px rgb(95, 104, 115); transform: scaleX(0.9763); transform-origin: 0px 50%;">DIFFICUL...</div>
<div style="position:absolute;left:783.6px;top:403.2px;width:1px;height:175px;background:#eceef1"></div>
<div style="position:absolute;left:845.3px;top:403.2px;width:1px;height:175px;background:#eceef1"></div>
<div class="a" style="left:670.6px;top:447.4px;font-size:9px;line-height:12px;color:#3777c0">how to take care of your...</div>
<div class="a" style="left:782.2px;width:50px;text-align:right;top:447.4px;font-size:9px;line-height:12px;color:#262b33">1.3K</div>
<div style="position:absolute;left:863.9px;top:444.2px;width:30.7px;height:15.3px;border:1px solid #f1d65c;border-radius:3px;background:#fff"></div>
<div style="position:absolute;left:869.5px;top:449.8px;width:4.3px;height:4.3px;border-radius:50%;background:#f2c81d"></div>
<div class="a" style="left: 877.6px; top: 446.5px; font-size: 8.6px; line-height: 12px; color: rgb(48, 53, 61); transform: scaleX(1.0876); transform-origin: 0px 50%;">51</div>
<div class="a" style="left:670.6px;top:474.2px;font-size:9px;line-height:12px;color:#3777c0">what skin care products ...</div>
<div class="a" style="left:782.2px;width:50px;text-align:right;top:474.2px;font-size:9px;line-height:12px;color:#262b33">880</div>
<div style="position:absolute;left:863.9px;top:471.0px;width:30.7px;height:15.3px;border:1px solid #f1d65c;border-radius:3px;background:#fff"></div>
<div style="position:absolute;left:869.5px;top:476.6px;width:4.3px;height:4.3px;border-radius:50%;background:#f2c81d"></div>
<div class="a" style="left: 877.6px; top: 473.3px; font-size: 8.6px; line-height: 12px; color: rgb(48, 53, 61); transform: scaleX(1.0876); transform-origin: 0px 50%;">47</div>
<div class="a" style="left:670.6px;top:501.0px;font-size:9px;line-height:12px;color:#3777c0">what is a good skin care ...</div>
<div class="a" style="left:782.2px;width:50px;text-align:right;top:501.0px;font-size:9px;line-height:12px;color:#262b33">880</div>
<div style="position:absolute;left:863.9px;top:497.8px;width:30.7px;height:15.3px;border:1px solid #f1d65c;border-radius:3px;background:#fff"></div>
<div style="position:absolute;left:869.5px;top:503.4px;width:4.3px;height:4.3px;border-radius:50%;background:#f2c81d"></div>
<div class="a" style="left: 877.6px; top: 500.1px; font-size: 8.6px; line-height: 12px; color: rgb(48, 53, 61); transform: scaleX(1.0876); transform-origin: 0px 50%;">56</div>
<div class="a" style="left:670.6px;top:527.8px;font-size:9px;line-height:12px;color:#3777c0">how to take care your sk...</div>
<div class="a" style="left:782.2px;width:50px;text-align:right;top:527.8px;font-size:9px;line-height:12px;color:#262b33">720</div>
<div style="position:absolute;left:863.9px;top:524.6px;width:30.7px;height:15.3px;border:1px solid #f1d65c;border-radius:3px;background:#fff"></div>
<div style="position:absolute;left:869.5px;top:530.2px;width:4.3px;height:4.3px;border-radius:50%;background:#f2c81d"></div>
<div class="a" style="left: 877.6px; top: 526.9px; font-size: 8.6px; line-height: 12px; color: rgb(48, 53, 61); transform: scaleX(1.0876); transform-origin: 0px 50%;">45</div>
<div class="a" style="left:670.6px;top:554.6px;font-size:9px;line-height:12px;color:#3777c0">what is the best skin car...</div>
<div class="a" style="left:782.2px;width:50px;text-align:right;top:554.6px;font-size:9px;line-height:12px;color:#262b33">590</div>
<div style="position:absolute;left:863.9px;top:551.4px;width:30.7px;height:15.3px;border:1px solid #f1d65c;border-radius:3px;background:#fff"></div>
<div style="position:absolute;left:869.5px;top:557.0px;width:4.3px;height:4.3px;border-radius:50%;background:#f2c81d"></div>
<div class="a" style="left: 877.6px; top: 553.7px; font-size: 8.6px; line-height: 12px; color: rgb(48, 53, 61); transform: scaleX(1.0876); transform-origin: 0px 50%;">45</div>
<div style="position:absolute;left:409.7px;top:403.2px;width:2px;height:175px;background:#dde0e8"></div>
<div style="position:absolute;left:657.3px;top:403.2px;width:2px;height:175px;background:#dde0e8"></div>


</body></html>
